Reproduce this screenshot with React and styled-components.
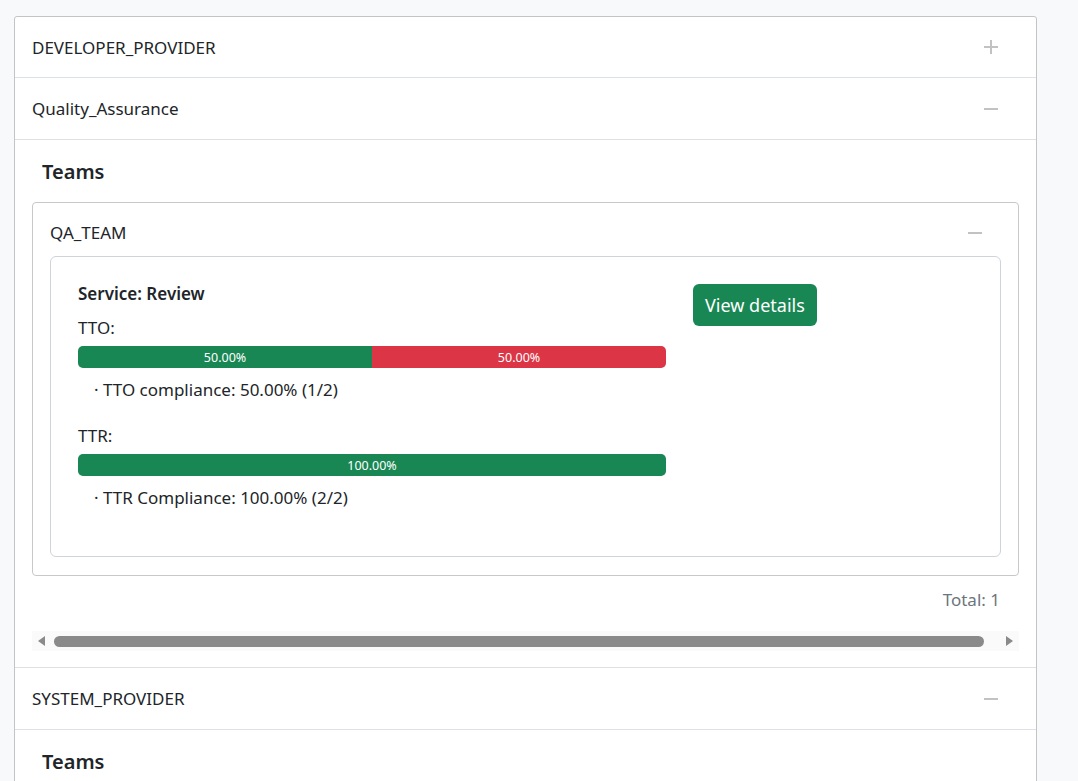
import React from 'react';
import styled, { createGlobalStyle } from 'styled-components';

const GlobalStyle = createGlobalStyle`
  body {
    margin: 0;
    background: #f8f9fa;
    font-family: "Noto Sans", "Open Sans", sans-serif;
    color: #212529;
  }
`;

const Page = styled.div`
  padding: 16px 0 40px 14px;
`;

const Accordion = styled.div`
  width: 1023px;
  background: #fff;
  border: 1px solid #c4c4c4;
  border-radius: 3px;
  box-sizing: border-box;
`;

const Item = styled.div`
  border-top: ${p => (p.$first ? 'none' : '1px solid #dee2e6')};
`;

const Header = styled.div`
  display: flex;
  align-items: center;
  justify-content: space-between;
  height: ${p => (p.$open ? 61 : 60)}px;
  padding: 0 37px 0 17px;
  font-size: 17px;
  border-bottom: ${p => (p.$open ? '1px solid #dee2e6' : 'none')};
`;

const Body = styled.div`
  padding: 0 17px 16px 17px;
`;

const TeamsTitle = styled.h3`
  margin: 0;
  padding: 20px 0 18px 10px;
  font-size: 20px;
  line-height: 24px;
  font-weight: 600;
`;

const TeamCard = styled.div`
  border: 1px solid #c8c8c8;
  border-radius: 4px;
`;

const TeamHeader = styled.div`
  display: flex;
  align-items: center;
  justify-content: space-between;
  padding: 18px 35px 11px 17px;
  font-size: 17px;
  line-height: 24px;
`;

const TeamBody = styled.div`
  padding: 0 17px 18px 17px;
`;

const ServiceCard = styled.div`
  display: grid;
  grid-template-columns: 588px auto;
  column-gap: 27px;
  align-items: start;
  border: 1px solid #ced4da;
  border-radius: 6px;
  padding: 25px 28px 46px 27px;
`;

const Column = styled.div`
  display: flex;
  flex-direction: column;
`;

const ServiceTitle = styled.div`
  font-size: 17px;
  line-height: 24px;
  font-weight: 600;
`;

const Label = styled.div`
  font-size: 17px;
  line-height: 24px;
  margin-top: ${p => p.$top || 10}px;
`;

const Bar = styled.div`
  display: flex;
  height: 22px;
  margin-top: 6px;
  border-radius: 5px;
  overflow: hidden;
  background: #e9ecef;
`;

const Segment = styled.div`
  display: flex;
  align-items: center;
  justify-content: center;
  background: ${p => p.$color};
  color: #fff;
  font-size: 12.5px;
`;

const Note = styled.div`
  font-size: 17px;
  line-height: 24px;
  margin-top: 10px;
  padding-left: 16px;
`;

const Button = styled.button`
  margin-top: 2px;
  height: 42px;
  padding: 0 12px;
  background: #198754;
  color: #fff;
  border: none;
  border-radius: 6px;
  font-family: inherit;
  font-size: 18px;
  justify-self: start;
  cursor: pointer;
`;

const Total = styled.div`
  text-align: right;
  color: #6c757d;
  font-size: 17px;
  line-height: 24px;
  padding: 12px 19px 0 0;
`;

const ScrollTrack = styled.div`
  display: flex;
  align-items: center;
  height: 20px;
  margin-top: 19px;
  background: #fafafa;
  padding: 0 6px;
`;

const Arrow = styled.div`
  width: 0;
  height: 0;
  border-top: 5px solid transparent;
  border-bottom: 5px solid transparent;
  ${p => (p.$dir === 'left' ? 'border-right: 7px solid #8a8a8a;' : 'border-left: 7px solid #8a8a8a;')}
`;

const Thumb = styled.div`
  flex: 1;
  height: 11px;
  border-radius: 6px;
  background: #8a8a8a;
  margin: 0 22px 0 9px;
`;

const ToggleIcon = ({ open }) => (
  <svg width="16" height="16" viewBox="0 0 16 16">
    <line x1="1" y1="8" x2="15" y2="8" stroke="#c2c2c2" strokeWidth="2" />
    {!open && <line x1="8" y1="1" x2="8" y2="15" stroke="#c2c2c2" strokeWidth="2" />}
  </svg>
);

const ComplianceBar = ({ parts }) => (
  <Bar>
    {parts.map((p, i) => (
      <Segment key={i} $color={p.color} style={{ width: `${p.value}%` }}>
        {p.value.toFixed(2)}%
      </Segment>
    ))}
  </Bar>
);

const TeamBlock = ({ name }) => (
  <TeamCard>
    <TeamHeader>
      <span>{name}</span>
      <ToggleIcon open />
    </TeamHeader>
    <TeamBody>
      <ServiceCard>
        <Column>
          <ServiceTitle>Service: Review</ServiceTitle>
          <Label>TTO:</Label>
          <ComplianceBar parts={[{ value: 50, color: '#198754' }, { value: 50, color: '#dc3545' }]} />
          <Note>· TTO compliance: 50.00% (1/2)</Note>
          <Label $top={22}>TTR:</Label>
          <ComplianceBar parts={[{ value: 100, color: '#198754' }]} />
          <Note>· TTR Compliance: 100.00% (2/2)</Note>
        </Column>
        <Button>View details</Button>
      </ServiceCard>
    </TeamBody>
  </TeamCard>
);

const TeamsSection = ({ team }) => (
  <Body>
    <TeamsTitle>Teams</TeamsTitle>
    <TeamBlock name={team} />
    <Total>Total: 1</Total>
    <ScrollTrack>
      <Arrow $dir="left" />
      <Thumb />
      <Arrow $dir="right" />
    </ScrollTrack>
  </Body>
);

const providers = [
  { name: 'DEVELOPER_PROVIDER', open: false },
  { name: 'Quality_Assurance', open: true, team: 'QA_TEAM' },
  { name: 'SYSTEM_PROVIDER', open: true, team: 'SYS_TEAM' },
];

export default function App() {
  return (
    <>
      <GlobalStyle />
      <Page>
        <Accordion>
          {providers.map((p, i) => (
            <Item key={p.name} $first={i === 0}>
              <Header $open={p.open}>
                <span>{p.name}</span>
                <ToggleIcon open={p.open} />
              </Header>
              {p.open && <TeamsSection team={p.team} />}
            </Item>
          ))}
        </Accordion>
      </Page>
    </>
  );
}
